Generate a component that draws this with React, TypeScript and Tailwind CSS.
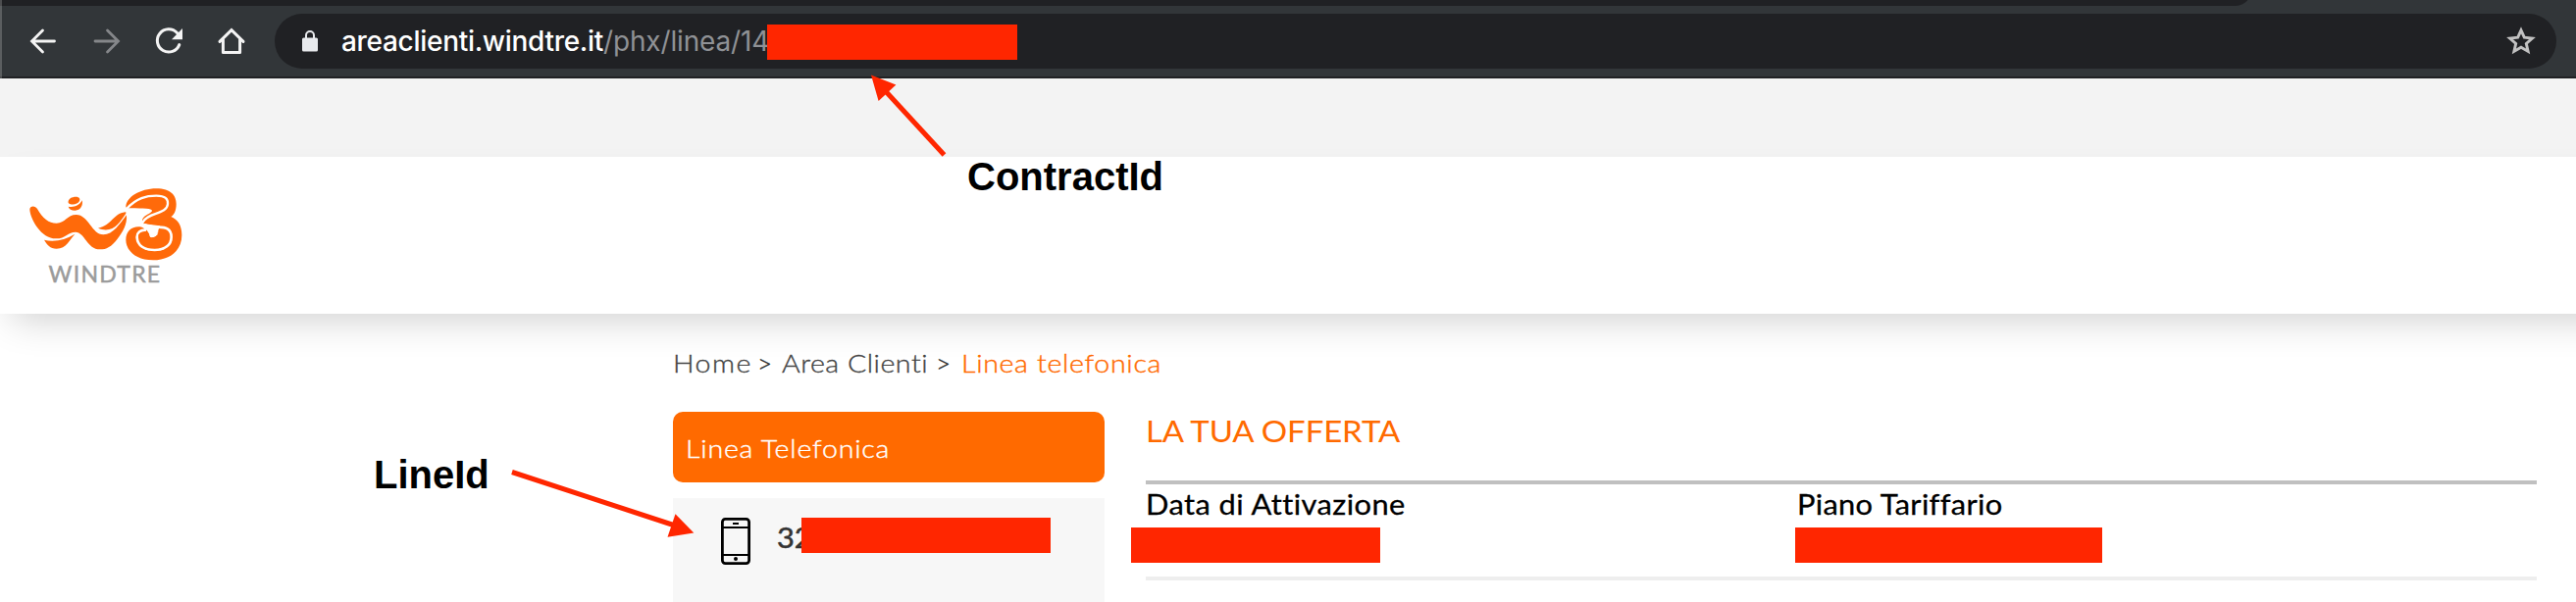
import type { ReactNode } from "react";

const redacted = "bg-[#ff2600] outline-1 -outline-offset-1 outline-[#ff2600]/60";

function NavIcons() {
  return (
    <div className="flex h-full items-center">
      <svg className="ml-[28px] mt-[-1px] h-8 w-8" viewBox="0 0 32 32" fill="none" stroke="#f4f4f4" strokeWidth="2.8" strokeLinecap="round">
        <path d="M15.5 5 L4.5 16 L15.5 27 M5 16 H27.5" />
      </svg>
      <svg className="ml-[32px] mt-[-1px] h-8 w-8" viewBox="0 0 32 32" fill="none" stroke="#85878a" strokeWidth="2.8" strokeLinecap="round">
        <path d="M17.5 5 L28.5 16 L17.5 27 M28 16 H5" />
      </svg>
      <svg className="ml-[32px] h-8 w-8" viewBox="0 0 32 32" fill="none" stroke="#f4f4f4" strokeWidth="3" strokeLinecap="round">
        <path d="M26.8 19.6 A11.6 11.6 0 1 1 24.5 7.6" />
        <path d="M30 3 V14.2 H19 Z" fill="#f4f4f4" stroke="none" />
      </svg>
      <svg className="ml-[32px] h-8 w-8" viewBox="0 0 32 32" fill="none" stroke="#f4f4f4" strokeWidth="3" strokeLinejoin="round" strokeLinecap="round">
        <path d="M4 16.4 L16 4.6 L28 16.4" strokeLinejoin="miter" />
        <path d="M7.4 14.5 V27.5 H24.6 V14.5" />
      </svg>
    </div>
  );
}

function Toolbar() {
  return (
    <div className="h-20 border-b-2 border-[#202124] bg-[#323639]">
      <div className="h-[6px] w-[2296px] overflow-hidden">
        <div className="-mt-[26px] h-8 rounded-br-[18px] bg-[#202124]" />
      </div>
      <div className="flex h-[72px] items-center pr-5">
        <div className="h-full w-[280px] shrink-0">
          <NavIcons />
        </div>
        <div className="flex h-14 grow items-center rounded-full bg-[#202124] pl-[28px] pr-[20px]">
          <svg className="h-[22px] w-4 shrink-0" viewBox="0 0 16 22">
            <rect x="0" y="7.5" width="16" height="14" rx="1.6" fill="#e8eaed" />
            <path d="M4 8.5 V5 A4 4 0 0 1 12 5 V8.5" fill="none" stroke="#e8eaed" strokeWidth="2" />
          </svg>
          <div className="ml-6 flex items-center whitespace-nowrap font-['Inter',sans-serif] text-[28px] leading-none">
            <span className="w-[267px] font-[450] tracking-[-0.3px] text-white">areaclienti.windtre.it</span>
            <span className="w-[167px] tracking-[-0.15px] text-[#8f9195]">/phx/linea/14</span>
            <span className={"mt-px h-[36px] w-[255px] " + redacted} />
          </div>
          <svg className="ml-auto h-[32px] w-[32px]" viewBox="0 0 32 32" fill="none" stroke="#c1c1c1" strokeWidth="2.9">
            <path d="M16 4.8 L19.3 12.2 L27.4 13 L21.3 18.4 L23.1 26.4 L16 22.2 L8.9 26.4 L10.7 18.4 L4.6 13 L12.7 12.2 Z" />
          </svg>
        </div>
      </div>
    </div>
  );
}

function Logo() {
  return (
    <div className="flex w-[214px] flex-col items-center">
      <svg className="h-[84px] w-[160px]" viewBox="80 80 480 252">
        <g fill="#ff6a0a">
          <path d="M90 160 C90 148 107 147 113 158 C130 188 148 202 172 202 C198 202 205 176 232 176 C270 176 280 237 315 237 C345 237 365 204 386 177 C389 205 373 232 358 250 C340 274 324 282 305 282 C265 282 258 229 230 229 C207 229 200 249 170 249 C125 249 92 190 90 160 Z" />
          <path d="M134 253 C165 261 198 253 228 235 C213 251 202 280 172 280 C152 280 143 267 134 253 Z" />
          <path d="M299 217 C340 210 345 172 382 168 C386 168 385 171 382 175 C366 198 344 236 299 217 Z" />
          <path d="M208 140 C206 127 219 121 231 121 C242 121 245 128 242 134 C237 145 217 148 208 140 Z" />
          <path d="M208 151 C224 155 242 148 250 132 C254 147 245 163 229 163 C217 163 210 159 208 151 Z" />
        </g>
        <g transform="translate(342 78)">
          <path
            fill="#ff6a0a"
            d="M42 75 C42 45 85 18 135 18 C180 18 196 40 196 65 C196 85 190 98 180 104 C200 112 213 130 213 160 C213 205 180 237 125 237 C70 237 42 205 42 175 C42 148 60 133 85 135 C94 136 99 140 99 144 L135 140 L125 131 L97 126 L92 113 C100 96 120 95 122 86 C120 78 100 80 56 78 L46 78 Z"
          />
          <path fill="none" stroke="#fff" strokeWidth="7" d="M44 80 C75 46 105 40 135 40 C163 40 171 50 170 65 C168 98 108 90 93 122" />
          <path fill="none" stroke="#fff" strokeWidth="8" d="M104 145 C86 143 75 154 76 168 C78 192 98 206 130 206 C162 206 181 190 181 166 C181 143 166 135 138 136 C120 136 110 132 98 129" />
          <path fill="#fff" d="M98 126 L146 132 L141 146 C141 160 136 167 121 168 C108 166 118 152 101 142 Z" />
          <path fill="#ff6a0a" d="M80 162 C84 150 98 148 112 155 C116 158 110 166 121 169 C134 168 141 158 140 150 L130 190 L100 190 Z" />
        </g>
      </svg>
      <div className="mt-[-4px] font-['Lato',sans-serif] text-[23px] leading-6 tracking-[1.3px] text-[#9b9b9b] [-webkit-text-stroke:0.5px_#9b9b9b]">WINDTRE</div>
    </div>
  );
}

function Wide({ className, children }: { className: string; children: ReactNode }) {
  return (
    <span className={"inline-block origin-left scale-x-110 whitespace-nowrap font-['Lato',sans-serif] " + className}>
      {children}
    </span>
  );
}

function Breadcrumb() {
  return (
    <nav className="flex h-[100px] items-center text-[26px] font-light leading-8 text-[#444]">
      <span className="w-[86px]"><Wide className="tracking-[1.3px] [-webkit-text-stroke:0.35px_#444]">Home</Wide></span>
      <span className="w-[25px] font-['Lato',sans-serif] text-[#222] [-webkit-text-stroke:0.35px_#222]">&gt;</span>
      <span className="w-[157px]"><Wide className="tracking-[0.45px] [-webkit-text-stroke:0.35px_#444]">Area Clienti</Wide></span>
      <span className="w-[26px] font-['Lato',sans-serif] text-[#222] [-webkit-text-stroke:0.35px_#222]">&gt;</span>
      <Wide className="tracking-[0.6px] text-[#ff6a00] [-webkit-text-stroke:0.4px_#ff6a00]">Linea telefonica</Wide>
    </nav>
  );
}

function PhoneIcon() {
  return (
    <svg className="h-12 w-[30px]" viewBox="0 0 30 48" fill="none" stroke="#000" strokeWidth="2">
      <rect x="1.4" y="1.4" width="27.2" height="45.2" rx="3" strokeWidth="2.8" />
      <path d="M2 10 H28 M2 38 H28 M12 6 H18" />
      <circle cx="15" cy="42" r="2" fill="#000" stroke="none" />
    </svg>
  );
}

function Sidebar() {
  return (
    <aside className="flex h-[194px] w-[440px] flex-col gap-4">
      <div className="flex h-[72px] items-center rounded-[10px] bg-[#ff6a00] pl-[13px] pt-[2px] text-[26px] font-light text-white [-webkit-text-stroke:0.4px_#fff]">
        <Wide className="tracking-[0.7px]">Linea Telefonica</Wide>
      </div>
      <div className="flex grow items-start bg-[#f7f7f7] pl-[49px] pt-5">
        <PhoneIcon />
        <div className="ml-[27px] flex h-[36px] w-[25px] items-center pt-[3px] text-[28px] text-[#333] [-webkit-text-stroke:0.5px_#333]">
          <Wide className="">32</Wide>
        </div>
        <div className={"relative h-[36px] w-[254px] " + redacted} />
      </div>
    </aside>
  );
}

function Offer() {
  return (
    <section className="w-[1418px]">
      <h2 className="flex h-[70px] items-center pb-[33px] text-[30px] leading-9 text-[#ff6a00]">
        <Wide className="tracking-[-0.1px]">LA TUA OFFERTA</Wide>
      </h2>
      <div className="flex h-[102px] border-b-4 border-t-4 border-b-[#eee] border-t-[#c0c0c0] text-[28px] text-black [-webkit-text-stroke:0.3px_#000]">
        <div className="w-[664px] pt-[2px]">
          <div className="h-[42px] leading-[36px]"><Wide className="tracking-[0.4px]">Data di Attivazione</Wide></div>
          <div className={"ml-[-15px] h-[36px] w-[254px] " + redacted} />
        </div>
        <div className="pt-[2px]">
          <div className="h-[42px] leading-[36px]"><Wide className="tracking-[0.3px]">Piano Tariffario</Wide></div>
          <div className={"ml-[-2px] h-[36px] w-[313px] " + redacted} />
        </div>
      </div>
    </section>
  );
}

function Annotations() {
  return (
    <div className="pointer-events-none absolute inset-0 font-['Liberation_Sans',sans-serif] text-[40px] font-bold leading-[46px] text-black">
      <svg className="absolute left-0 top-0 h-[614px] w-[1240px]" viewBox="0 0 1240 614" fill="#ff2600" stroke="#ff2600">
        <path d="M962.5 158 L900 90" strokeWidth="5" />
        <path d="M888 76.5 L913.4 86.5 L895.6 103 Z" stroke="none" />
        <path d="M522 481.5 L688 536" strokeWidth="5" />
        <path d="M707.3 543.5 L688.5 524.3 L680.5 547.8 Z" stroke="none" />
      </svg>
      <div className="absolute left-[986px] top-[157px]">ContractId</div>
      <div className="absolute left-[381px] top-[461px]">LineId</div>
    </div>
  );
}

export default function App() {
  return (
    <div className="relative h-[614px] w-[2626px] overflow-hidden bg-white">
      <Toolbar />
      <div className="h-20 bg-[#f3f3f3]" />
      <header className="relative flex h-40 w-[2700px] bg-white pt-[27px] shadow-[0_18px_36px_-12px_rgba(0,0,0,0.19)]">
        <Logo />
      </header>
      <main className="relative pl-[686px]">
        <Breadcrumb />
        <div className="flex gap-[42px]">
          <Sidebar />
          <Offer />
        </div>
      </main>
      <Annotations />
      <div className="absolute left-0 top-0 h-20 w-[2px] bg-white/20" />
    </div>
  );
}
